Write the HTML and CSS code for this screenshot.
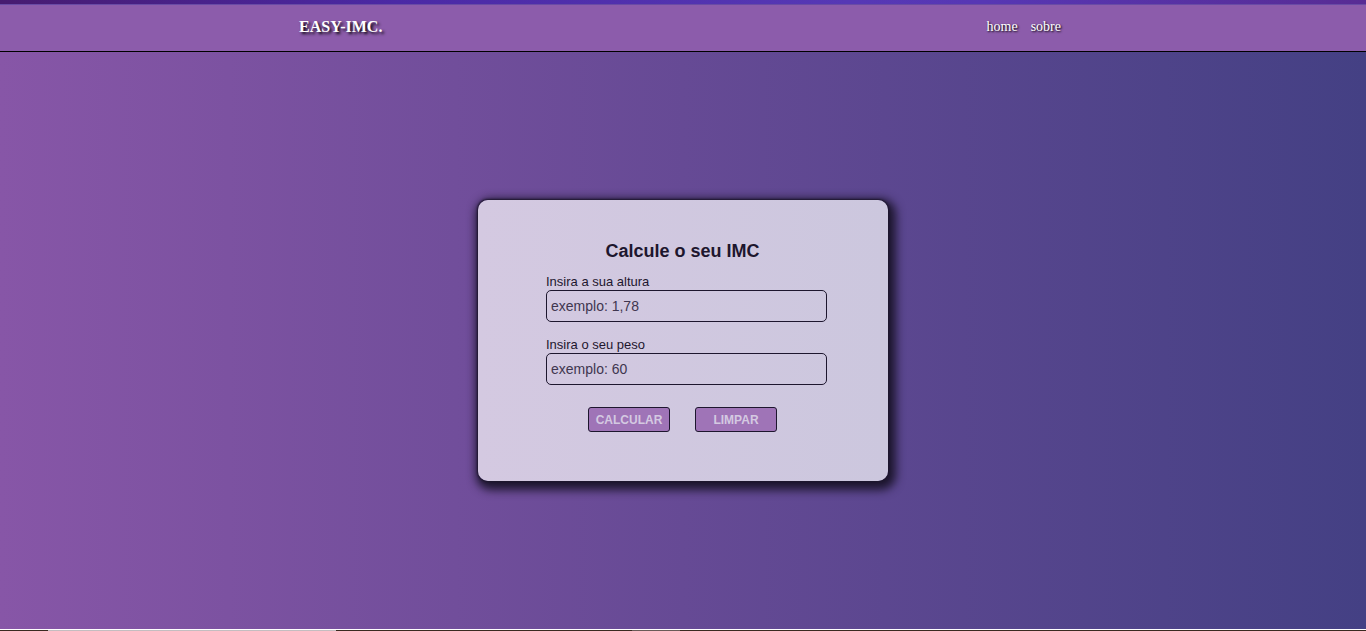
FILE: index.html
```html
<!DOCTYPE html>
<html lang="pt-BR">
<head>
  <meta charset="utf-8">
  <meta name="viewport" content="width=device-width, initial-scale=1">
  <title>EASY-IMC</title>
  <link rel="stylesheet" href="styles.css">
</head>
<body>
  <div class="window-strip"></div>
  <header class="header">
    <div class="header-inner">
      <h1 class="logo">EASY-IMC.</h1>
      <nav class="nav">
        <a href="#home">home</a>
        <a href="#sobre">sobre</a>
      </nav>
    </div>
  </header>
  <main class="main">
    <form class="card">
      <h2 class="title">Calcule o seu IMC</h2>
      <div class="field">
        <label for="altura">Insira a sua altura</label>
        <input id="altura" type="text" placeholder="exemplo: 1,78">
      </div>
      <div class="field">
        <label for="peso">Insira o seu peso</label>
        <input id="peso" type="text" placeholder="exemplo: 60">
      </div>
      <div class="actions">
        <button type="button">CALCULAR</button>
        <button type="reset">LIMPAR</button>
      </div>
    </form>
  </main>
  <div class="taskbar"></div>
</body>
</html>
```

FILE: styles.css
```css
* {
  box-sizing: border-box;
}

body {
  margin: 0;
  min-height: 100vh;
  display: flex;
  flex-direction: column;
  font-family: "Liberation Sans", Arial, sans-serif;
  color: #1d162e;
  background: linear-gradient(to right, #8756a7, #664a95 50%, #444084);
}

.window-strip {
  height: 5px;
  border-bottom: 1px solid #694ba5;
  background: linear-gradient(to right, #471b70, #4b29a5 29%, #5638b5 62%, #5737b4 72%, #582c94);
}

.header {
  padding: 12px 0 14px;
  border-bottom: 1px solid #000;
  background: #8c5cab;
  color: #fff;
  font-family: "Liberation Serif", "Times New Roman", serif;
  line-height: 20px;
}

.header-inner {
  display: flex;
  justify-content: space-between;
  max-width: 768px;
  margin: 0 auto;
  padding-right: 6px;
}

.logo {
  margin: 0;
  font-size: 16px;
  text-shadow: 2px 2px 3px #000;
}

.nav {
  display: flex;
  gap: 13px;
  font-size: 14px;
}

.nav a {
  color: inherit;
  text-decoration: none;
  text-shadow: 1px 1px 2px #000;
}

.main {
  flex: 1;
  display: flex;
  align-items: center;
  justify-content: center;
}

.card {
  width: 410px;
  padding: 40px 61px 49px 68px;
  border-radius: 10px;
  background: linear-gradient(to right, #d4c9e1, #ccc7de);
  box-shadow: 0 0 2px 1px #1d162e, 3px 4px 10px 5px #1d162e;
}

.title {
  margin: 0 8px 11px 0;
  font-size: 18px;
  line-height: 22px;
  text-align: center;
}

.field {
  display: flex;
  flex-direction: column;
  margin-bottom: 14px;
  font-size: 13px;
}

.field label {
  line-height: 17px;
}

.field input {
  height: 32px;
  padding: 0 4px;
  border: 1px solid #1d162e;
  border-radius: 5px;
  background: transparent;
  color: #1d162e;
  font: 14px "Liberation Sans", Arial, sans-serif;
}

.field input::placeholder {
  color: #40364f;
}

.actions {
  display: flex;
  justify-content: center;
  gap: 25px;
  padding: 8px 8px 0 0;
}

.actions button {
  width: 82px;
  height: 25px;
  padding: 0;
  border: 1px solid #1d162e;
  border-radius: 3px;
  background: #9f74b7;
  color: #d4c9e1;
  font: bold 12px "Liberation Sans", Arial, sans-serif;
}

.taskbar {
  height: 2px;
  border-top: 1px solid #fff;
  background: linear-gradient(to right, #3a2a20 48px, #c4bdc0 48px 336px, #3a2a20 336px 632px, #6a5b58 632px 680px, #3a2a20 680px);
}
```
